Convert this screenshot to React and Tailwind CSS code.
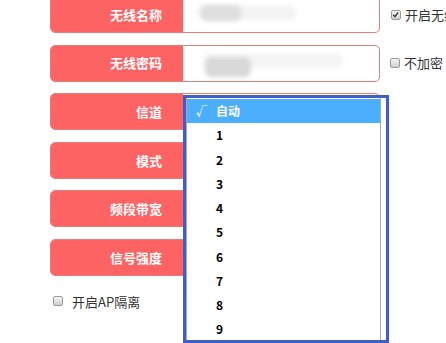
import React from "react";

const FONT = { fontFamily: '"Microsoft YaHei", "Noto Sans CJK SC", "Noto Sans", sans-serif' };

function Check({ checked }) {
  return (
    <span className="relative inline-block w-[10px] h-[10px] rounded-[2px] border border-[#9a9a9a] bg-gradient-to-b from-[#f4f4f4] to-[#d0d0d0] shrink-0">
      {checked && (
        <svg viewBox="0 0 10 10" className="absolute left-0 top-0 w-[8px] h-[8px]">
          <path d="M1.6 4.8 L3.7 7 L7.6 1.8" fill="none" stroke="#333" strokeWidth="1.7" />
        </svg>
      )}
    </span>
  );
}

function Row({ label, children, right }) {
  return (
    <div className="flex items-center">
      <div className="flex w-[330px] shrink-0 h-[37px] rounded-[5px] border border-[#e27d7d] bg-white overflow-hidden">
        <div className="w-[133px] ml-[-1px] h-[35px] shrink-0 bg-[#fe6363] rounded-l-[4px] flex items-center justify-end pr-[21px] text-white font-bold text-[13px]">
          {label}
        </div>
        <div className="relative flex-1">{children}</div>
      </div>
      {right}
    </div>
  );
}

const items = ["自动", "1", "2", "3", "4", "5", "6", "7", "8", "9"];

export default function App() {
  return (
    <div className="relative w-[446px] h-[343px] overflow-hidden bg-white text-[#333]" style={FONT}>
      <div className="flex flex-col gap-[11.6px] mt-[-4px] ml-[50px]">
        <Row
          label="无线名称"
          right={
            <div className="flex items-center gap-[4px] ml-[11px] whitespace-nowrap text-[13px]">
              <Check checked />
              <span>开启无线广播</span>
            </div>
          }
        >
          <div className="absolute left-[14px] top-[9px] w-[100px] h-[14px] rounded-full bg-[#f3f3f3] blur-[2px]" />
          <div className="absolute left-[18px] top-[8px] w-[40px] h-[16px] rounded-[6px] bg-[#dedede] blur-[2px]" />
        </Row>
        <Row
          label="无线密码"
          right={
            <div className="flex items-center gap-[4px] ml-[10px] whitespace-nowrap text-[13px]">
              <Check />
              <span>不加密</span>
            </div>
          }
        >
          <div className="absolute left-[20px] top-[8px] w-[140px] h-[14px] rounded-full bg-[#f5f5f5] blur-[2px]" />
          <div className="absolute left-[22px] top-[11px] w-[46px] h-[20px] rounded-[6px] bg-[#d9d9d9] blur-[2px]" />
        </Row>
        <Row label="信道" />
        <Row label="模式" />
        <Row label="频段带宽" />
        <Row label="信号强度" />
        <div className="flex items-center gap-[9px] ml-[3px] mt-[4px] text-[13px]">
          <Check />
          <span>开启AP隔离</span>
        </div>
      </div>

      <div className="absolute left-[183px] top-[95px] w-[206px] h-[248px] border-[3px] border-[#3e5ec8] bg-white">
        <div className="w-[195px] h-full border-x border-[#a9a9a9] pt-[1px]">
          {items.map((t, i) => (
            <div
              key={t}
              className={
                "flex items-center h-[24.25px] text-[12px] font-bold " +
                (i === 0 ? "bg-[#4baeff] text-white" : "text-black")
              }
            >
              <span className="w-[29px] pl-[9px]">{i === 0 ? "√" : ""}</span>
              <span>{t}</span>
            </div>
          ))}
        </div>
      </div>
    </div>
  );
}
